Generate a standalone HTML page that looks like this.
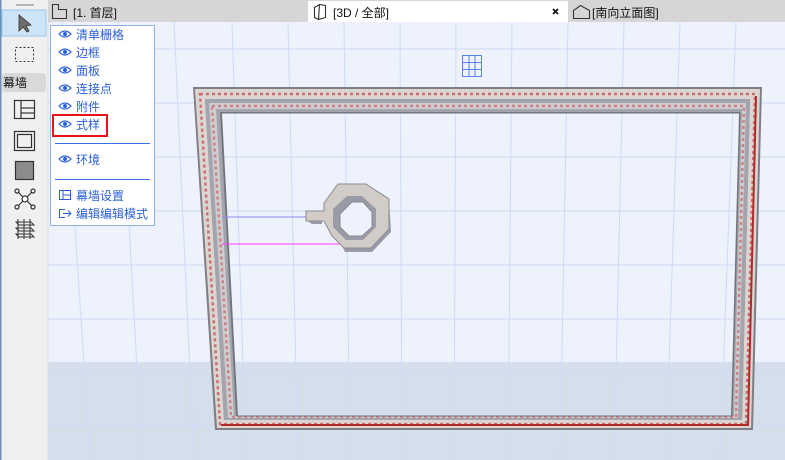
<!DOCTYPE html>
<html><head><meta charset="utf-8"><style>
*{margin:0;padding:0;box-sizing:border-box}
body{width:785px;height:460px;overflow:hidden;position:relative;background:#edf2fc;font-family:"Liberation Sans","Noto Sans CJK SC",sans-serif}
.abs{position:absolute}
.menu{left:50px;top:25px;width:105px;height:201px;background:#fff;border:1px solid #8fb0ee}
.mi{position:absolute;left:7px;font-size:12px;color:#2a5fd6;height:18px;line-height:18px;white-space:nowrap}
.mi span{margin-left:4px}
.sep{position:absolute;left:4px;width:95px;height:1px;background:#3a6ee0}
</style></head><body>
<svg class="abs" style="left:0;top:0" width="785" height="460">
 <rect x="48" y="22" width="737" height="438" fill="#edf2fc"/>
 <rect x="48" y="362" width="737" height="98" fill="#d5dfeb"/>
 <g stroke="#cddbf6" stroke-width="1" fill="none">
  <line x1="48" y1="49" x2="785" y2="49"/><line x1="48" y1="103" x2="785" y2="103"/>
  <line x1="48" y1="157" x2="785" y2="157"/><line x1="48" y1="211" x2="785" y2="211"/>
  <line x1="48" y1="265" x2="785" y2="265"/><line x1="48" y1="319" x2="785" y2="319"/>
  <line x1="48" y1="373" x2="785" y2="373"/><line x1="48" y1="425" x2="785" y2="425"/>
  <line x1="62" y1="22" x2="90" y2="460"/><line x1="118" y1="22" x2="142" y2="460"/>
  <line x1="174" y1="22" x2="194" y2="460"/><line x1="232" y1="22" x2="246" y2="460"/>
  <line x1="288" y1="22" x2="298" y2="460"/><line x1="344" y1="22" x2="350" y2="460"/>
  <line x1="400" y1="22" x2="402" y2="460"/><line x1="456" y1="22" x2="454" y2="460"/>
  <line x1="512" y1="22" x2="508" y2="460"/><line x1="568" y1="22" x2="560" y2="460"/>
  <line x1="624" y1="22" x2="614" y2="460"/><line x1="680" y1="22" x2="666" y2="460"/>
  <line x1="736" y1="22" x2="720" y2="460"/>
 </g>
 <!-- frame -->
 <path fill-rule="evenodd" fill="#7e7f85" d="M193 87 L762 87 L753 430 L215 430 Z M222 113 L739 113 L731 416 L238 416 Z"/>
 <path fill-rule="evenodd" fill="#ddd5d1" d="M195 89 L760 89 L751 428 L217 428 Z M205 99 L750 99 L742 420 L224 420 Z"/>
 <path fill="none" stroke="#c57070" stroke-width="2.5" stroke-dasharray="3 3" d="M200 94 L755 94 L746 424 L220 424 Z"/>
 <path fill="none" stroke="#b02a2a" stroke-width="2" d="M221 425 L748 425 L756 96"/>
 <path fill-rule="evenodd" fill="#a3a5ae" d="M205 99 L750 99 L742 420 L224 420 Z M220 112 L740 112 L732 416 L236 416 Z"/>
 <path fill-rule="evenodd" fill="#d0ccd0" d="M209 103 L746 103 L738 418 L228 418 Z M216 109 L742 109 L734 416 L234 416 Z"/>
 <path fill="none" stroke="#c98585" stroke-width="2.5" stroke-dasharray="3 3" d="M212 106 L744 106 L736 417 L231 417 Z"/>
 <path fill="none" stroke="#6f7078" stroke-width="1" d="M221 113 L740 113 L732 416 L237 416 Z"/>
 <!-- lines -->
 <line x1="222" y1="217" x2="307" y2="217" stroke="#8c8cf0" stroke-width="1"/>
 <line x1="222" y1="244" x2="342" y2="244" stroke="#ff3cff" stroke-width="1"/>
 <!-- octagon -->
 <path fill="#9a9ba6" d="M306 216 L322 216 L322 224 L312 224 L306 220 Z"/>
 <path fill="#9a9ba6" d="M389 200 L391 232 L372 252 L345 252 L343 248 L370 247 L387 229 Z"/>
 <path fill="#d2ccc8" stroke="#8b8b90" stroke-width="1" d="M306 211 L324 211 L324 203 L338 184 L366 184 L389 199 L389 229 L371 248 L344 248 L332 236 L324 221 L306 221 Z"/>
 <path fill="#9a9ba6" d="M347 196 L362 196 L376 209 L376 227 L363 240 L346 240 L333 227 L333 209 Z"/>
 <path fill="#edf2fc" stroke="#8b8b90" d="M352 202 L363 202 L372 212 L372 227 L362 236 L349 236 L340 227 L340 214 Z"/>
 <!-- grid icon -->
 <g stroke="#5a84e8" fill="none" stroke-width="1">
  <rect x="462.5" y="55.5" width="19" height="21"/>
  <line x1="469" y1="55" x2="469" y2="77"/><line x1="475" y1="55" x2="475" y2="77"/>
  <line x1="462" y1="62.5" x2="482" y2="62.5"/><line x1="462" y1="69.5" x2="482" y2="69.5"/>
 </g>
 <!-- tab bar -->
 <rect x="0" y="0" width="785" height="22" fill="#d6d6d6"/>
 <rect x="308" y="1" width="260" height="21" fill="#fff"/>
 <!-- left toolbar -->
 <rect x="0" y="0" width="48" height="460" fill="#f0f0f0"/>
 <rect x="0" y="0" width="1.5" height="460" fill="#6a8fb8"/>
 <line x1="48" y1="22" x2="48" y2="460" stroke="#dcdcdc"/>
 <line x1="16" y1="5" x2="34" y2="5" stroke="#777"/>
 <rect x="2" y="10" width="44" height="26" fill="#cde3f6" stroke="#9cc8ee"/>
 <path d="M19 15 L19 31 L23 27 L27 32 L29 31 L26 26 L31 25 Z" fill="#6e6e6e" stroke="#333" stroke-width="0.8"/>
 <rect x="15.5" y="47.5" width="18" height="14" fill="none" stroke="#333" stroke-dasharray="2 2"/>
 <rect x="2" y="73" width="44" height="19" rx="3" fill="#d9d9d9"/>
 <g stroke="#333" fill="none" stroke-width="1.2">
  <rect x="14.5" y="100.5" width="20" height="18"/><line x1="21" y1="100" x2="21" y2="119"/><line x1="21" y1="108" x2="34" y2="108"/><line x1="21" y1="113" x2="34" y2="113"/>
  <rect x="14.5" y="131.5" width="20" height="19"/><rect x="17.5" y="134.5" width="14" height="13"/>
  <rect x="15.5" y="161.5" width="18" height="18" fill="#8c8c8c"/>
  <line x1="18" y1="192" x2="32" y2="206"/><line x1="32" y1="192" x2="18" y2="206"/>
  <circle cx="17" cy="191" r="2"/><circle cx="33" cy="191" r="2"/><circle cx="17" cy="207" r="2"/><circle cx="33" cy="207" r="2"/><circle cx="25" cy="199" r="3" fill="#fff"/>
  <path d="M16 222 L31 222 L34 225 L19 225 Z M16 228 L31 228 L34 231 L19 231 Z M16 234 L31 234 L34 237 L19 237 Z M18 219 L18 239 M24 219 L24 239 M30 219 L30 239" stroke-width="1"/>
 </g>
 <!-- tab icons -->
 <g stroke="#333" fill="none" stroke-width="1.1">
  <path d="M52.5 18.5 L52.5 4.5 L58.5 4.5 L58.5 9.5 L66.5 9.5 L66.5 18.5 Z"/>
  <path d="M314.5 7.5 L319.5 4.5 L325.5 5.5 L325.5 17.5 L318.5 19.5 L314.5 17.5 Z M319.5 4.5 L318.5 19.5"/>
  <path d="M573.5 18.5 L573.5 10.5 L580.5 5.5 L589.5 10.5 L589.5 18.5 Z"/>
 </g>
 <path d="M553 9 L558 14 M558 9 L553 14" stroke="#111" stroke-width="1.6"/>
</svg>
<div class="abs" style="left:73px;top:4px;font-size:12px;color:#111">[1. 首层]</div>
<div class="abs" style="left:333px;top:4px;font-size:12px;color:#111">[3D / 全部]</div>
<div class="abs" style="left:592px;top:4px;font-size:12px;color:#111">[南向立面图]</div>
<div class="abs" style="left:3px;top:74px;font-size:12px;color:#111">幕墙</div>
<div class="abs menu">
 <svg width="0" height="0" style="position:absolute"><defs><g id="eye"><path d="M1 5 Q7 -1 13 5 Q7 11 1 5 Z" fill="none" stroke="#2a5fd6" stroke-width="1.2"/><circle cx="7" cy="5" r="2" fill="#2a5fd6"/></g></defs></svg>
 <div class="mi" style="top:0px"><svg width="14" height="10"><use href="#eye"/></svg><span>清单栅格</span></div>
 <div class="mi" style="top:18px"><svg width="14" height="10"><use href="#eye"/></svg><span>边框</span></div>
 <div class="mi" style="top:36px"><svg width="14" height="10"><use href="#eye"/></svg><span>面板</span></div>
 <div class="mi" style="top:54px"><svg width="14" height="10"><use href="#eye"/></svg><span>连接点</span></div>
 <div class="mi" style="top:72px"><svg width="14" height="10"><use href="#eye"/></svg><span>附件</span></div>
 <div class="mi" style="top:90px"><svg width="14" height="10"><use href="#eye"/></svg><span>式样</span></div>
 <div class="abs" style="left:1px;top:88px;width:56px;height:23px;border:2px solid #e8141c"></div>
 <div class="sep" style="top:117px"></div>
 <div class="mi" style="top:125px"><svg width="14" height="10"><use href="#eye"/></svg><span>环境</span></div>
 <div class="sep" style="top:153px"></div>
 <div class="mi" style="top:161px"><svg width="14" height="10"><rect x="1.5" y="0.5" width="11" height="9" fill="none" stroke="#2a5fd6"/><line x1="5" y1="0" x2="5" y2="10" stroke="#2a5fd6"/><line x1="5" y1="5" x2="13" y2="5" stroke="#2a5fd6"/></svg><span>幕墙设置</span></div>
 <div class="mi" style="top:179px"><svg width="14" height="10"><path d="M7 1.5 L1.5 1.5 L1.5 9.5 L7 9.5 M5 5.5 L13 5.5 M10 2.5 L13 5.5 L10 8.5" fill="none" stroke="#2a5fd6"/></svg><span>编辑编辑模式</span></div>
</div>
</body></html>
